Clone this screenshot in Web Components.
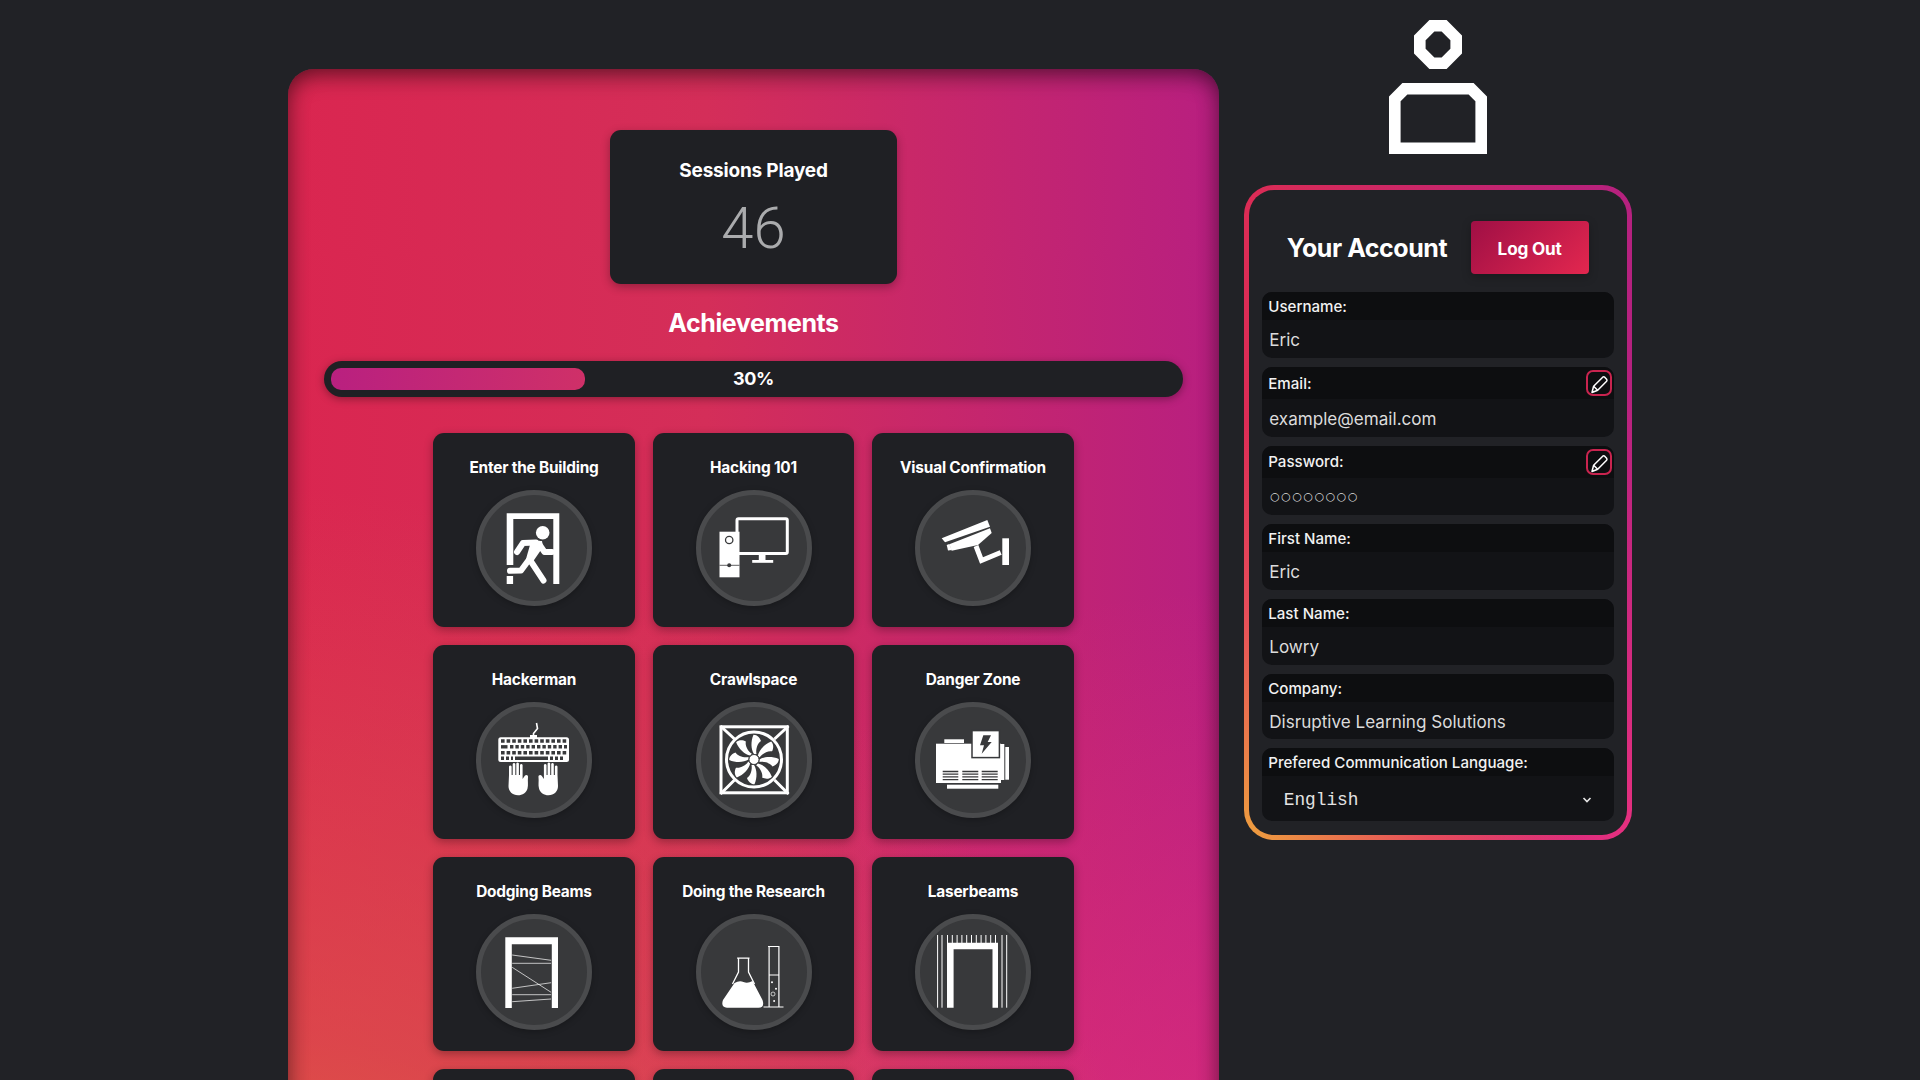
<!DOCTYPE html>
<html lang="en"><head><meta charset="utf-8"><title>Account</title>
<style>
html,body{margin:0;height:1080px;overflow:hidden;background:#212226;}
body{font-family:Inter,"Liberation Sans",sans-serif;color:#fff;}
</style></head>
<body>
<app-shell>
  <main-panel>
    <stat-card label="Sessions Played" value="46"></stat-card>
    <achievement-bar percent="30"></achievement-bar>
    <achievement-grid>
      <achievement-card label="Enter the Building" icon="door"></achievement-card>
      <achievement-card label="Hacking 101" icon="computer"></achievement-card>
      <achievement-card label="Visual Confirmation" icon="camera"></achievement-card>
      <achievement-card label="Hackerman" icon="keyboard"></achievement-card>
      <achievement-card label="Crawlspace" icon="fan"></achievement-card>
      <achievement-card label="Danger Zone" icon="generator"></achievement-card>
      <achievement-card label="Dodging Beams" icon="beams"></achievement-card>
      <achievement-card label="Doing the Research" icon="flask"></achievement-card>
      <achievement-card label="Laserbeams" icon="laser"></achievement-card>
      <achievement-card></achievement-card>
      <achievement-card></achievement-card>
      <achievement-card></achievement-card>
    </achievement-grid>
  </main-panel>
  <side-column>
    <user-avatar></user-avatar>
    <account-panel>
      <account-field label="Username:" value="Eric"></account-field>
      <account-field label="Email:" value="example@email.com" editable></account-field>
      <account-field label="Password:" value="○○○○○○○○" editable kind="password"></account-field>
      <account-field label="First Name:" value="Eric"></account-field>
      <account-field label="Last Name:" value="Lowry"></account-field>
      <account-field label="Company:" value="Disruptive Learning Solutions"></account-field>
      <account-field label="Prefered Communication Language:" value="English" kind="select"></account-field>
    </account-panel>
  </side-column>
</app-shell>
<script>
const W='#fff', D='#38393b';
const blades=[...Array(8)].map((_,i)=>`<path transform="rotate(${i*45})" d="M0-5.5C-3-10-3.5-18-.5-24.8C3.5-24.8 6-21.5 7-18.5C3.5-16.5 1.5-10 2.5-5.5Z"/>`).join('');
const HAND='M39 78V69.5a1.4 1.4 0 0 1 2.6 0V78H42.7V67a1.4 1.4 0 0 1 2.6 0V78H46.3V66.5a1.4 1.4 0 0 1 2.6 0V78H50V68a1.4 1.4 0 0 1 2.6 0V82L54.8 78.8C56 77.5 58.4 78 58 80.5C57.5 84 58.5 88 57.5 91.5C56.5 95.5 52.5 98.3 48 98.3C42.5 98.3 38.5 94.5 38.5 89Z';
const ICONS={
door:['11 10',`<g fill="${W}"><path d="M36.7 28.3H89.3V99H83.3V34H43.3V80H36.7Z"/><rect x="36.7" y="91" width="6.4" height="8"/><circle cx="72.7" cy="47.7" r="6.8"/><path d="M61 56.5L72 56L73 62L62 78L56 74Z"/></g><g fill="none" stroke="${W}" stroke-width="6" stroke-linecap="round" stroke-linejoin="round"><path d="M47 67L53 58L66 57.5"/><path d="M69 59L74.5 67H82"/><path d="M58 76L51 85.5L40 85.8"/><path d="M60 75L73.5 95.5"/></g>`],
computer:['10.5 10',`<g fill="none" stroke="${W}" stroke-width="3"><rect x="46.5" y="33.8" width="50.3" height="34.7" rx="1.5"/></g><g fill="${W}"><rect x="68.3" y="70" width="6.7" height="5"/><rect x="61.7" y="75" width="21" height="2.8"/><rect x="29" y="46.7" width="20" height="45.6"/></g><circle cx="38.7" cy="55" r="3.7" fill="${W}" stroke="${D}" stroke-width="1.3"/><path d="M29 80.3H49" stroke="${D}" stroke-width=".8"/><circle cx="38.7" cy="80.3" r="2" fill="${D}"/>`],
camera:['10 10',`<g fill="${W}"><path d="M31.7 53.3L77.3 35L80 41.7L35 57.3Z"/><path d="M39.3 59.3L80 43.3L81.7 48L68 60L41.7 65.7Z"/><path d="M36.7 60L39.3 59L42 65L38 65.5Z"/><rect x="92.3" y="53.3" width="6.7" height="26.7"/></g><path d="M66 61L71.5 75.5L90.7 67.5" fill="none" stroke="${W}" stroke-width="5"/>`],
keyboard:['11 10',`<path d="M63.5 40.5V36.5L67.5 31.5L66.5 26" fill="none" stroke="${W}" stroke-width="1.6"/><rect x="60" y="38" width="7" height="3" fill="${W}"/><rect x="28.3" y="40.3" width="70.7" height="24.7" rx="2.5" fill="${W}"/><g fill="none" stroke="${D}" stroke-width="3.4"><path d="M31 44H97" stroke-dasharray="3.6 2"/><path d="M40 49.8H97" stroke-dasharray="3.4 2"/><path d="M31 55.7H97" stroke-dasharray="3.6 2"/><path d="M31 61.3H34M36 61.3H39M41 61.3H43M45 61.3H78M80 61.3H83M85 61.3H88M90 61.3H93"/></g><path d="M31 49.8H37.5" stroke="${D}" stroke-width="3.4"/><g fill="${W}"><path d="${HAND}"/><path transform="matrix(-1 0 0 1 126.5 0)" d="${HAND}"/></g>`],
fan:['10.5 10',`<g fill="none" stroke="${W}" stroke-width="3"><rect x="30.5" y="29.8" width="66.3" height="66"/><path d="M30 29L44 42M98 29L84 42M30 97L44 83M98 97L84 83"/><circle cx="63.5" cy="62.5" r="27.5"/></g><g transform="translate(63.5 62.5)" fill="${W}">${blades}<circle r="5" stroke="${D}" stroke-width=".9"/></g>`],
generator:['10 10',`<g fill="${W}"><rect x="26" y="46.7" width="65" height="39.3"/><rect x="90" y="47" width="4.3" height="36"/><rect x="34.3" y="42.3" width="19.7" height="3.7"/><rect x="95.3" y="50" width="3.7" height="32.7"/><rect x="37" y="87.7" width="51.3" height="4"/></g><rect x="62" y="33.6" width="27.4" height="27" fill="${W}" stroke="${D}" stroke-width="1.5"/><path d="M73.3 38.3H81L77.7 45H81.7L71.7 56.7L74 48.3H70Z" fill="${D}"/><g stroke="${D}" stroke-width="1.3"><path d="M32.7 74.5H48.3M32.7 77.2H48.3M32.7 79.9H48.3M32.7 82.6H48.3"/><path d="M52.3 74.5H68.3M52.3 77.2H68.3M52.3 79.9H68.3M52.3 82.6H68.3"/><path d="M71.7 74.5H87.7M71.7 77.2H87.7M71.7 79.9H87.7M71.7 82.6H87.7"/></g>`],
beams:['11 9',`<path fill="${W}" d="M35.3 27.3H88V98H81.8V34.3H41.8V98H35.3Z"/><g stroke="${W}" stroke-width=".7"><path d="M42.2 45L81.1 50.3M42.2 53.3H81.1M42.2 57.3L81.1 82.3M42.2 78.3L81.1 72.7M42.2 84.7H81.1M42.2 91.7L81.1 89"/></g>`],
flask:['230.5 9',`<path fill="${W}" d="M264 73Q269 70 273 72T282 71L292 90Q294.5 97.7 288 97.7H256.5Q250 97 252.5 90Z"/><path d="M266.6 48.2H279M268 48.5V62L262 74M278 48.5V62L284 74" fill="none" stroke="${W}" stroke-width="1.3"/><path d="M297.5 36.5H308.4V96.5M298.6 36.5V96.5M293 97H313M298 65H308" fill="none" stroke="${W}" stroke-width="1.2"/><g fill="${W}"><circle cx="301.5" cy="72.3" r="1"/><circle cx="305.5" cy="78.7" r="1"/><circle cx="303.6" cy="91" r="1"/></g><circle cx="302.5" cy="84" r="2" fill="none" stroke="${W}" stroke-width=".7"/>`],
laser:['450 9',`<path fill="${W}" d="M477 32.7H528V97.7H522.5V39.3H483.6V97.7H477Z"/><g stroke="${W}" stroke-width="1"><path d="M467.6 25V97.7M472 25V97.7M532 25V97.7M536.7 25V97.7"/><path d="M477.5 25V33M482.3 25V33M487.1 25V33M491.9 25V33M496.7 25V33M501.5 25V33M506.3 25V33M511.1 25V33M515.9 25V33M520.7 25V33M525.5 25V33"/></g>`]
};
function def(name,css,html){
  customElements.define(name,class extends HTMLElement{
    connectedCallback(){
      if(this.shadowRoot)return;
      const r=this.attachShadow({mode:'open'});
      r.innerHTML=`<style>${css}</style>`+(typeof html==='function'?html(this):html);
    }
  });
}
const HEAD='Inter,"Liberation Sans",sans-serif';
def('app-shell',`:host{display:flex;justify-content:center;align-items:flex-start;gap:25px;width:1920px}`,`<slot></slot>`);
def('main-panel',`:host{display:flex;flex-direction:column;align-items:center;box-sizing:border-box;width:930.5px;margin-top:68.7px;height:1420px;padding:61.3px 35px 0;border-radius:26px;
background:radial-gradient(900px 1000px at 0 100%,#e4743a 0,rgba(222,90,72,.6) 45%,rgba(222,90,72,0) 100%),radial-gradient(800px 900px at 100% 100%,#e6307c 0,rgba(230,48,124,0) 100%),linear-gradient(90deg,#da2650 0,#d42e59 45%,#b81f80 100%);
box-shadow:inset 0 10px 24px -6px rgba(0,0,0,.45),inset 0 0 22px rgba(0,0,0,.3)}`,`<slot></slot>`);
def('stat-card',`:host{display:flex;flex-direction:column;align-items:center;box-sizing:border-box;width:287px;height:154px;padding-top:27px;background:#1f2024;border-radius:11px;box-shadow:0 3px 10px rgba(0,0,0,.3)}
.l{font:700 19px/27px ${HEAD};letter-spacing:-.2px;white-space:nowrap}.v{font:300 58px/60px Roboto,sans-serif;color:#aaabad;margin-top:14px}`,
h=>`<div class="l">${h.getAttribute('label')}</div><div class="v">${h.getAttribute('value')}</div>`);
def('achievement-bar',`:host{display:block;width:859px;margin-top:22px}
h2{margin:0;text-align:center;font:700 25px/34px ${HEAD};letter-spacing:-.4px}
.t{position:relative;box-sizing:border-box;height:36px;margin-top:21px;padding:7px;background:#1f2024;border-radius:18px;box-shadow:0 2px 8px rgba(0,0,0,.35)}
.f{height:22px;width:254px;border-radius:10px;background:linear-gradient(90deg,#b92080,#cf3068)}
.p{position:absolute;inset:1px 0 0;display:flex;align-items:center;justify-content:center;font:700 18px/36px ${HEAD};letter-spacing:-.3px}`,
h=>`<h2>Achievements</h2><div class="t"><div class="f"></div><div class="p">${h.getAttribute('percent')}%</div></div>`);
def('achievement-grid',`:host{display:grid;grid-template-columns:repeat(3,201.5px);grid-auto-rows:194px;gap:18px;justify-content:center;margin-top:36px}`,`<slot></slot>`);
def('achievement-card',`:host{display:flex;flex-direction:column;align-items:center;background:#1f2024;border-radius:11px;box-shadow:0 3px 10px rgba(0,0,0,.3)}
.l{height:57px;box-sizing:border-box;padding-top:24px;font:700 15.4px/22px ${HEAD};letter-spacing:-.2px;white-space:nowrap}
.c{box-sizing:border-box;width:116px;height:116px;border-radius:50%;background:#38393b;border:5px solid #4a4b4d;box-shadow:0 2px 6px rgba(0,0,0,.25)}
svg{display:block;width:106px;height:106px;overflow:visible}`,
h=>{const k=h.getAttribute('icon');if(!k)return `<div class="l"></div>`;const [o,s]=ICONS[k];return `<div class="l">${h.getAttribute('label')}</div><div class="c"><svg viewBox="${o} 106 106">${s}</svg></div>`});
def('side-column',`:host{display:flex;flex-direction:column;align-items:center;width:388px;padding-top:20px}`,`<slot></slot>`);
def('user-avatar',`:host{display:block;width:98px;height:134px;margin-bottom:31px}svg{display:block}`,
`<svg width="98" height="134" viewBox="0 0 98 134" fill="none" stroke="#fff" stroke-width="11.6"><path d="M42.8 5.8H55.2L67.2 17.8V31.2L55.2 43.2H42.8L30.8 31.2V17.8Z"/><path d="M15.8 68.8H82.2L92.2 78.8V128.2H5.8V78.8Z"/></svg>`);
def('account-panel',`:host{display:flex;flex-direction:column;box-sizing:border-box;width:388px;height:655px;padding:30.7px 13px 14px;border:5px solid transparent;border-radius:30px;
background:linear-gradient(#212226,#212226) padding-box,radial-gradient(340px 420px at 0 100%,#ee9f3e 0,rgba(232,80,90,.9) 55%,rgba(232,80,90,0) 100%) border-box,radial-gradient(300px 460px at 100% 100%,#e6307f 0,rgba(230,48,127,0) 100%) border-box,linear-gradient(90deg,#dc2c55,#b5217f) border-box}
.h{display:flex;justify-content:center;align-items:center;gap:23.5px;margin-bottom:18.6px}
h1{margin:0;padding-top:2px;font:700 25px/34px ${HEAD};letter-spacing:-.45px;white-space:nowrap}
button{all:unset;box-sizing:border-box;width:118px;height:53px;padding-top:1px;text-align:center;font:700 17.2px/53px ${HEAD};letter-spacing:-.2px;border-radius:4px;background:linear-gradient(135deg,#9f0f45,#e3274f);box-shadow:0 3px 10px rgba(0,0,0,.25)}
.f{display:flex;flex-direction:column;gap:9px}`,
`<div class="h"><h1>Your Account</h1><button>Log Out</button></div><div class="f"><slot></slot></div>`);
def('account-field',`:host{display:block;border-radius:10px;overflow:hidden;background:#121316}
.h{display:flex;justify-content:space-between;align-items:center;box-sizing:border-box;min-height:28px;padding:0 2px 0 6.5px;background:#0d0e10;font:500 15.1px/28px ${HEAD};color:#f2f2f2;white-space:nowrap}
.h span{position:relative;top:.8px}
.v{box-sizing:border-box;height:37.7px;padding:1.8px 7.5px 0;font:400 17.1px/36px ${HEAD};color:#dcdcdc;white-space:nowrap}
.pw{font:400 11px/38px "DejaVu Sans",sans-serif;letter-spacing:1.5px;color:#ddd;padding:0 8.5px}
.e{box-sizing:border-box;width:26px;height:26px;margin:3px 0;border:2px solid #c9244f;border-radius:7px}
.e svg{display:block}
.s{display:flex;align-items:center;justify-content:space-between;box-sizing:border-box;height:44.2px;padding:7px 22px 5px 18px}
.s span{font:400 17.8px/32px "Liberation Mono",monospace;color:#e4e4e4;margin-left:4px}`,
h=>{const k=h.getAttribute('kind'),val=h.getAttribute('value');
const e=h.hasAttribute('editable')?`<div class="e"><svg width="22" height="22" viewBox="2 2 22 22" fill="none" stroke="#fff" stroke-width="1.5" stroke-linejoin="round"><path d="M6 22.5L7.6 16.2L16.7 7.2Q17.7 6.4 18.7 7.2L20.6 9.2Q21.4 10.2 20.6 11.2L11.7 20.2Z"/><path d="M7.6 16.2L11.7 20.2" /></svg></div>`:'';
let b=`<div class="v${k==='password'?' pw':''}">${val}</div>`;
if(k==='select')b=`<div class="s"><span>${val}</span><svg width="10" height="8" viewBox="0 0 10 8" fill="none" stroke="#e4e4e4" stroke-width="1.6"><path d="M1.5 2L5 5.6L8.5 2"/></svg></div>`;
return `<div class="h"><span>${h.getAttribute('label')}</span>${e}</div>${b}`});
</script>
</body></html>
